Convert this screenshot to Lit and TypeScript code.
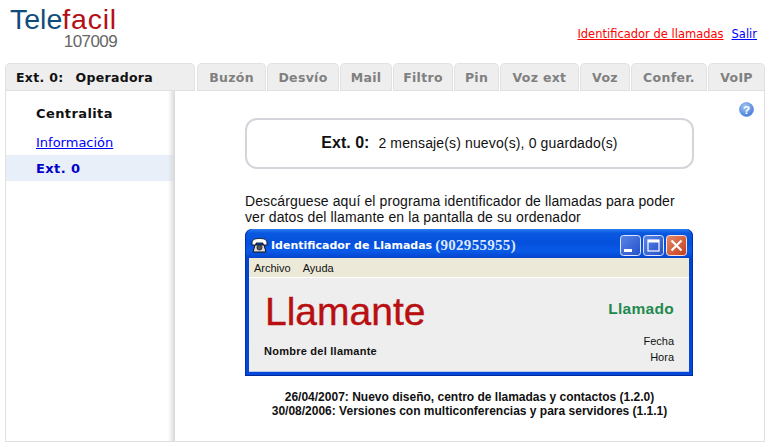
import { LitElement, html, css } from "lit";
import { customElement } from "lit/decorators.js";

const TABS: [string, number][] = [
  ["Buzón", 69], ["Desvío", 72], ["Mail", 52], ["Filtro", 60], ["Pin", 45],
  ["Voz ext", 79], ["Voz", 50], ["Confer.", 76], ["VoIP", 57],
];

@customElement("app-root")
export class AppRoot extends LitElement {
  static styles = css`
    :host { display: block; width: 771px; height: 447px; background: #fff; overflow: hidden;
      font-family: "DejaVu Sans", sans-serif; font-size: 12px; color: #000; }
    a { cursor: pointer; }
    .header { height: 63px; display: flex; justify-content: space-between; padding: 0 14px 0 10px; }
    .logo { width: 107px; padding-top: 3px; display: flex; flex-direction: column; align-items: flex-end; font-family: "Liberation Sans", sans-serif; }
    .logo-main { font-size: 28.5px; line-height: 32px; color: #0f4c7c; font-weight: 400; align-self: flex-start; white-space: nowrap; }
    .logo-main b { color: #b30f15; font-weight: 400; letter-spacing: 0.8px; }
    .logo-num { font-size: 17px; line-height: 14px; color: #666; letter-spacing: -0.6px; }
    .links { display: flex; gap: 8px; padding-top: 26px; font-size: 11.5px; line-height: 16px; }
    .links .red { color: #f00; text-decoration: underline; }
    .links .blue { color: #00f; text-decoration: underline; }
    .tabs { display: flex; gap: 1px; padding-left: 5px; height: 28px; }
    .tab { box-sizing: border-box; height: 28px; background: #eee; border: 1px solid #e2e2e2; border-bottom: 1px solid #e0e0e0;
      border-radius: 5px 5px 0 0; display: flex; align-items: center; justify-content: center;
      font-weight: 700; font-size: 12.5px; letter-spacing: 0.3px; color: #808080; white-space: nowrap; }
    .tab.active { width: 190px; color: #111; justify-content: flex-start; padding-left: 10px; gap: 12px; margin-right: 1px; }
    .body { box-sizing: border-box; width: 760px; height: 351px; margin-left: 5px; border: 1px solid #e0e0e0; border-top: 0; display: flex; }
    .side { position: relative; width: 169px; flex: none; padding-top: 15px; }
    .side::after { content: ""; position: absolute; top: 0; bottom: 0; right: 0; width: 7px;
      background: linear-gradient(to right, rgba(221,221,221,0), rgba(214,214,214,0.95)); }
    .side h3 { margin: 0 0 12px 30px; font-size: 13px; line-height: 16px; font-weight: 700; letter-spacing: 0.4px; color: #111; }
    .side .info { display: block; margin: 0 0 3px 30px; font-size: 13px; line-height: 18px; color: #00f; text-decoration: underline; }
    .side .row { box-sizing: border-box; height: 26px; line-height: 25px; padding: 1px 0 0 30px; background: #e8eff9; color: #0000cc; font-weight: 700; font-size: 13px; letter-spacing: 0.4px; }
    .main { position: relative; flex: 1; padding: 27px 0 0 70px; }
    .help { position: absolute; top: 11px; right: 10px; width: 15px; height: 15px; display: block; }
    .status { box-sizing: border-box; width: 449px; height: 51px; border: 2px solid #d4d4da; border-radius: 12px; padding-bottom: 2px;
      display: flex; align-items: center; justify-content: center; gap: 9px;
      font-family: "Liberation Sans", sans-serif; font-size: 14px; letter-spacing: 0.14px; color: #111; }
    .status b { font-size: 16px; font-weight: 700; letter-spacing: 0; }
    .intro { margin: 24px 0 4px; font-family: "Liberation Sans", sans-serif; font-size: 14px; line-height: 16px; letter-spacing: 0.11px; color: #111; white-space: nowrap; }
    .win { box-sizing: border-box; width: 448px; height: 147px; background: linear-gradient(#2a7cf0, #0a58e0 4px, #0450dc 14px, #0a5ae8 22px, #0344cc 29px, #0348d8);
      border-radius: 7px 7px 0 0; padding: 0 4px 4px; display: flex; flex-direction: column; box-shadow: inset 0 -1px 0 #002a9c, inset 1px 0 0 #0030b0, inset -1px 0 0 #0030b0; }
    .titlebar { height: 29px; box-sizing: border-box; padding-top: 4px; display: flex; align-items: center; color: #fff; font-weight: 700; font-size: 11px; flex: none; }
    .titlebar svg.phone { width: 17px; height: 17px; margin: 0 3px 0 2px; flex: none; }
    .titlebar .num { font-family: "Liberation Serif", serif; font-size: 15px; color: #dce8ff; margin-left: 3px; letter-spacing: 0.3px; }
    .btns { margin-left: auto; display: flex; gap: 2px; padding-right: 2px; }
    .btns svg { width: 21px; height: 21px; display: block; }
    .menu { height: 20px; flex: none; background: #ece9d8; border-bottom: 1px solid #fff; box-sizing: border-box; display: flex; gap: 12px; padding-left: 5px; align-items: center;
      font-family: "Liberation Sans", sans-serif; font-size: 11px; color: #111; }
    .client { flex: 1; background: #eeeeee; border-bottom: 1px solid #b8c8e8; display: flex; justify-content: space-between; padding: 0 15px; }
    .cl { display: flex; flex-direction: column; }
    .caller { font-family: "Liberation Sans", sans-serif; font-size: 39px; line-height: 44px; color: #b81010; margin-top: 12px; margin-left: 1px; -webkit-text-stroke: 0.4px #b81010; }
    .name { font-weight: 700; color: #111; margin-top: 10px; line-height: 14px; font-family: "Liberation Sans", sans-serif; font-size: 11px; letter-spacing: 0.25px; }
    .cr { display: flex; flex-direction: column; align-items: flex-end; }
    .called { font-size: 15.5px; font-weight: 700; color: #1d8a4e; margin-top: 22px; font-family: "Liberation Sans", sans-serif; line-height: 18px; letter-spacing: 0.3px; }
    .meta { font-family: "Liberation Sans", sans-serif; font-size: 11px; line-height: 16px; color: #111; margin-top: 15px; text-align: right; }
    .news { width: 449px; margin-top: 14px; text-align: center; font-family: "Liberation Sans", sans-serif; font-size: 12px; line-height: 14px; font-weight: 700; color: #111; }
  `;

  render() {
    return html`
      <div class="header">
        <div class="logo">
          <div class="logo-main">Tele<b>facil</b></div>
          <div class="logo-num">107009</div>
        </div>
        <div class="links"><a class="red">Identificador de llamadas</a><a class="blue">Salir</a></div>
      </div>
      <div class="tabs">
        <div class="tab active"><span>Ext. 0:</span><span>Operadora</span></div>
        ${TABS.map(([t, w]) => html`<div class="tab" style="width:${w}px">${t}</div>`)}
      </div>
      <div class="body">
        <div class="side">
          <h3>Centralita</h3>
          <a class="info">Información</a>
          <div class="row">Ext. 0</div>
        </div>
        <div class="main">
          <svg class="help" viewBox="0 0 16 16">
            <defs><radialGradient id="hg" cx="40%" cy="30%" r="75%"><stop offset="0" stop-color="#a8c8f5"/><stop offset="1" stop-color="#3f78d8"/></radialGradient></defs>
            <circle cx="8" cy="8" r="7.500" fill="url(#hg)" stroke="#5a8ede" stroke-width="0.6"/>
            <text x="8" y="12.400" text-anchor="middle" font-family="Liberation Sans" font-weight="700" font-size="12.500" fill="#fff">?</text>
          </svg>
          <div class="status"><b>Ext. 0:</b><span>2 mensaje(s) nuevo(s), 0 guardado(s)</span></div>
          <div class="intro">Descárguese aquí el programa identificador de llamadas para poder<br>ver datos del llamante en la pantalla de su ordenador</div>
          <div class="win">
            <div class="titlebar">
              <svg class="phone" viewBox="0 0 17 17">
                <path d="M1 6 C1 2 5 1.500 8.500 1.500 S16 2 16 6 L16 8 L12 8 L12 6 L5 6 L5 8 L1 8Z" fill="#fff" stroke="#111" stroke-width="0.9"/>
                <path d="M4 8 L13 8 L15 15 L2 15Z" fill="#ddd" stroke="#111"/>
                <circle cx="8.500" cy="10.500" r="2.600" fill="#555" stroke="#111" stroke-width="0.6"/>
              </svg>
              <span>Identificador de Llamadas</span><span class="num">(902955955)</span>
              <div class="btns">
                <svg viewBox="0 0 21 21"><defs><linearGradient id="bb" x1="0" y1="0" x2="1" y2="1"><stop offset="0" stop-color="#5a86e8"/><stop offset="1" stop-color="#2450c8"/></linearGradient><linearGradient id="br" x1="0" y1="0" x2="1" y2="1"><stop offset="0" stop-color="#e88a68"/><stop offset="1" stop-color="#c43c1c"/></linearGradient></defs><rect x=".5" y=".5" width="20" height="20" rx="3" fill="url(#bb)" stroke="#dfe8fa"/><rect x="4" y="14" width="8" height="3" fill="#fff"/></svg>
                <svg viewBox="0 0 21 21"><rect x=".5" y=".5" width="20" height="20" rx="3" fill="url(#bb)" stroke="#dfe8fa"/><rect x="5" y="5" width="11" height="11" fill="none" stroke="#fff" stroke-width="1.200"/><rect x="5" y="5" width="11" height="2.500" fill="#fff"/></svg>
                <svg viewBox="0 0 21 21"><rect x=".5" y=".5" width="20" height="20" rx="3" fill="url(#br)" stroke="#f2e4de"/><path d="M5.500 5.500 L15.500 15.500 M15.500 5.500 L5.500 15.500" stroke="#fff" stroke-width="2.200"/></svg>
              </div>
            </div>
            <div class="menu"><span>Archivo</span><span>Ayuda</span></div>
            <div class="client">
              <div class="cl"><div class="caller">Llamante</div><div class="name">Nombre del llamante</div></div>
              <div class="cr"><div class="called">Llamado</div><div class="meta">Fecha<br>Hora</div></div>
            </div>
          </div>
          <div class="news">26/04/2007: Nuevo diseño, centro de llamadas y contactos (1.2.0)<br>30/08/2006: Versiones con multiconferencias y para servidores (1.1.1)</div>
        </div>
      </div>
    `;
  }
}
